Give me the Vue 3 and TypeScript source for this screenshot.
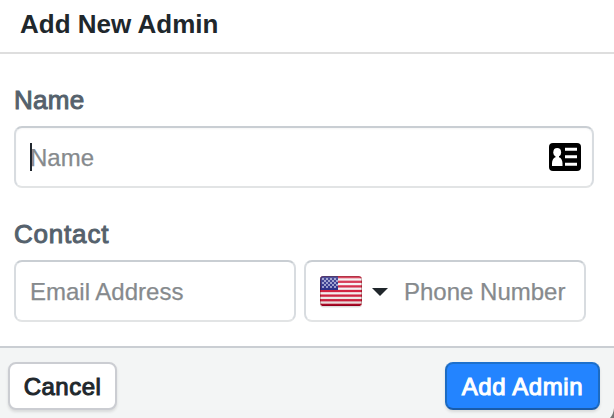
<script setup lang="ts">
import { ref } from 'vue'

const name = ref('')
const email = ref('')
const phone = ref('')
const redStripes = [0, 2, 4, 6, 8, 10, 12]
const stars: { x: number; y: number }[] = []
for (let row = 0; row < 5; row++) {
  for (let col = 0; col < 4; col++) {
    stars.push({ x: 2 + col * 4 + (row % 2) * 2, y: 2 + row * 2 })
  }
}
</script>

<template>
  <form class="dialog" @submit.prevent>
    <header class="head"><h1>Add New Admin</h1></header>
    <main class="body">
      <label class="label" for="name">Name</label>
      <div class="field name-field">
        <span class="caret"></span>
        <input id="name" v-model="name" class="name-input" type="text" placeholder="Name" />
        <svg class="card" width="32" height="28" viewBox="0 0 32 28">
          <rect width="32" height="28" rx="4" fill="#000" />
          <ellipse cx="8.2" cy="9.2" rx="3.9" ry="4.3" fill="#fff" />
          <path d="M6.5 12h3.5v2.2c2.3.8 3.4 3 3.5 6v2.8H3v-2.8c.1-3 1.2-5.2 3.5-6z" fill="#fff" />
          <path d="M16 6.3h12M16 13.7h12M16 21.2h12" stroke="#fff" stroke-width="3" />
        </svg>
      </div>
      <label class="label contact" for="email">Contact</label>
      <div class="row">
        <div class="field email-field">
          <input id="email" v-model="email" class="email-input" type="text" placeholder="Email Address" />
        </div>
        <div class="field phone-field">
          <svg class="flag" width="42" height="32" viewBox="0 0 42 32">
            <defs>
              <clipPath id="flag-shape"><rect width="42" height="30" rx="3.5" /></clipPath>
              <linearGradient id="shade" x1="0" y1="0" x2="0" y2="1">
                <stop offset="0" stop-color="#fff" stop-opacity=".24" />
                <stop offset=".5" stop-color="#fff" stop-opacity=".05" />
                <stop offset="1" stop-color="#600" stop-opacity=".14" />
              </linearGradient>
            </defs>
            <rect y="1.5" width="42" height="30" rx="3.5" fill="#000" opacity=".13" />
            <g clip-path="url(#flag-shape)">
              <rect width="42" height="30" fill="#f3f1f1" />
              <rect v-for="i in redStripes" :key="i" :y="i * 30 / 13" width="42" :height="30 / 13" fill="#cf1737" />
              <rect width="18" height="14" fill="#1d2080" />
              <rect v-for="(s, i) in stars" :key="i" :x="s.x" :y="s.y" width="2" height="2" fill="#8f91c7" />
              <rect width="42" height="30" fill="url(#shade)" />
              <rect x=".5" y=".5" width="41" height="29" rx="3" fill="none" stroke="#500" stroke-opacity=".32" />
              <path d="M2 29.3h38" stroke="#92001c" stroke-width="1.4" />
            </g>
          </svg>
          <svg class="arrow" width="16" height="8" viewBox="0 0 16 8"><path d="M0 0h16L8 8z" fill="#20262b" /></svg>
          <input v-model="phone" class="phone-input" type="tel" placeholder="Phone Number" aria-label="Phone Number" />
        </div>
      </div>
    </main>
    <footer class="foot">
      <button class="cancel" type="button">Cancel</button>
      <button class="submit" type="submit">Add Admin</button>
      <svg class="corner" width="4" height="10" viewBox="0 0 4 10"><path d="M4 0Q3.5 6 0 10h4z" fill="#777" /></svg>
    </footer>
  </form>
</template>

<style>
body { margin: 0; overflow: hidden; background: #fff; }
</style>

<style scoped>
* { box-sizing: border-box; }
.dialog { width: 614px; height: 418px; display: flex; flex-direction: column; font-family: "Liberation Sans", Arial, sans-serif; color: #20272c; background: #fff; overflow: hidden; }
.head { height: 54px; flex: none; border-bottom: 2px solid #dedede; padding: 9px 20px 0; }
h1 { margin: 0; font-size: 26px; line-height: 30px; letter-spacing: 0; font-weight: 700; }
.body { height: 292px; flex: none; padding: 31px 20px 0 14px; }
.label { display: block; font-size: 26px; line-height: 30px; font-weight: 400; color: #55616c; letter-spacing: .3px; -webkit-text-stroke: 1px #55616c; }
.contact { margin-top: 31px; letter-spacing: .8px; }
.field { height: 62px; display: flex; align-items: center; border: 2px solid; border-color: #c9ced3 #d8dce0 #e2e4e5 #d8dce0; border-radius: 8px; background: #fff; }
.name-field { position: relative; margin-top: 11px; padding: 0 11px 0 14px; box-shadow: inset 0 1px 2px #0000000a; }
.caret { position: absolute; left: 14px; top: 15px; width: 2px; height: 28px; background: #20262d; }
.row { display: flex; gap: 8px; margin-top: 11px; }
.email-field { width: 282px; padding-left: 14px; }
.phone-field { width: 282px; padding-left: 14px; }
input { min-width: 0; flex: 1; height: 36px; padding: 2px 0 0; border: 0; outline: 0; background: transparent; font: 24px/34px "Liberation Sans", Arial, sans-serif; }
input::placeholder { color: #868a8d; opacity: 1; -webkit-text-stroke: .25px #868a8d; }
.flag { margin-top: 2px; flex: none; }
.arrow { margin: 2px 16px 0 10px; flex: none; }
.foot { position: relative; height: 72px; flex: none; display: flex; justify-content: space-between; align-items: flex-start; border-top: 2px solid #caced3; background: #f3f5f5; padding: 14px 14px 0 8px; }
button { height: 48px; border: 2px solid; border-radius: 8px; padding: 2px 0 0; font: 400 24px/28px "Liberation Sans", Arial, sans-serif; box-shadow: 0 2px 3px #0000001c; -webkit-text-stroke: 1px currentColor; }
.cancel { width: 109px; border-color: #cbcdd2; color: #20272c; background: #fff; letter-spacing: .5px; }
.submit { width: 155px; border-color: #1d70cc #1c6bc2 #195cab; background: #2384ff; color: #fff; letter-spacing: .6px; }
.corner { position: absolute; right: 0; bottom: 0; }
</style>
